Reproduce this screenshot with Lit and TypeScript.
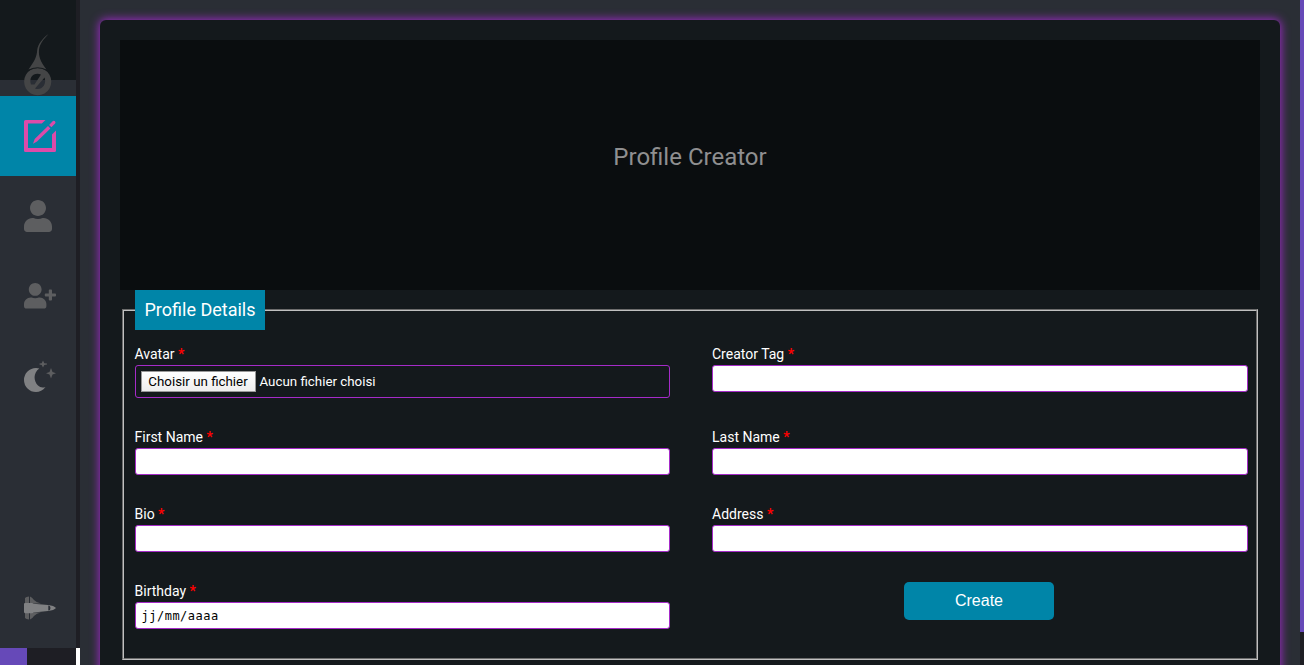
import { LitElement, html, css, svg } from "lit";
import { customElement } from "lit/decorators.js";

const BODY =
  "M224 256c70.7 0 128-57.3 128-128S294.7 0 224 0 96 57.3 96 128s57.3 128 128 128zm89.6 32h-16.7c-22.2 10.2-46.9 16-72.9 16s-50.6-5.8-72.9-16h-16.7C60.2 288 0 348.2 0 422.4V464c0 26.5 21.5 48 48 48h352c26.5 0 48-21.5 48-48v-41.6c0-74.2-60.2-134.4-134.4-134.4z";
const PLUS =
  "M624 208h-64v-64c0-8.8-7.2-16-16-16h-32c-8.8 0-16 7.2-16 16v64h-64c-8.8 0-16 7.2-16 16v32c0 8.8 7.2 16 16 16h64v64c0 8.8 7.2 16 16 16h32c8.8 0 16-7.2 16-16v-64h64c8.8 0 16-7.2 16-16v-32c0-8.8-7.2-16-16-16z";

@customElement("side-nav")
class SideNav extends LitElement {
  static styles = css`
    :host { display: flex; flex-direction: column; width: 76px; height: 665px; border-right: 4px solid #1e1e24; background: #2a2e35; box-sizing: content-box; }
    .logo { display: flex; height: 80px; margin-bottom: 16px; background: #14191c; padding: 32px 0 0 24px; box-sizing: border-box; }
    .logo svg { flex: none; overflow: visible; }
    .item { display: flex; align-items: center; height: 80px; padding-left: 24px; color: #5d5e60; }
    .active { background: #0085a8; color: #dc4ba9; }
    .last { margin-top: auto; }
    .bar { display: flex; height: 17px; margin-right: -4px; background: #1e1e24; flex: none; }
    .thumb { width: 27px; background: #6649b8; }
    .corner { width: 4px; margin-left: auto; background: #fff; }
  `;
  render() {
    return html`
      <div class="logo">
        <svg width="28" height="64" viewBox="0 0 28 64">
          ${svg`<g fill="#444546"><path d="M24.5 2C19 6 14 12 13.2 18C12.8 25 10.5 29 4.5 37.5Q13.5 34.2 22.5 37.5C16 29 14.5 24 15 18C15.6 12 19 8 24.5 2Z"/>
          <path fill-rule="evenodd" d="M13.7 36a13.6 13.6 0 1 0 .01 0ZM17 42.500C10 40 4.500 45 7 52.500H10.500ZM20.600 45.500L11 56.500C17 59 23 53 20.600 45.500Z"/></g>
          <path d="M5 38Q13.500 33.500 22.500 38" fill="none" stroke="#14191c" stroke-width=".8"/>`}
        </svg>
      </div>
      <div class="item active">
        <svg width="32" height="32" viewBox="0 0 32 32" fill="currentColor">
          <path d="M1.500 0H21.500L17.800 3.500H4V28H28V14.500L32 10.500V30.500Q32 32 30.500 32H1.500Q0 32 0 30.500V1.500Q0 0 1.500 0Z"/>
          <path d="M9 23.800L10.700 19L24 6L26.400 8.500L13 21.500ZM25.100 5L28.900 1.100Q30 .2 31 1.200Q32 2.400 31.100 3.400L27.400 7.300Z"/>
        </svg>
      </div>
      <div class="item"><svg width="28" height="32" viewBox="0 0 448 512" fill="currentColor"><path d=${BODY} /></svg></div>
      <div class="item"><svg width="32" height="25.6" viewBox="0 0 640 512" fill="currentColor"><path d=${BODY} /><path d=${PLUS} /></svg></div>
      <div class="item">
        <svg width="32" height="32" viewBox="0 0 32 32" fill="currentColor">
          <path fill="#808183" d="M12 8Q14 8 15.300 8.500C9 13 9.500 21 14 25.500Q17 28.500 21.500 27C19 30.500 15.500 32 12 32A12 12 0 0 1 12 8Z"/>
          <path d="M19 .5L20.300 3.200L23 3.500V4.500L20.300 5L19 7.500L17.700 5L15.500 4.500V3.500L17.700 3.200ZM27 8L28.500 12L32 13.300L28.500 14.600L27 18.500L25.500 14.600L22 13.300L25.500 12Z"/>
        </svg>
      </div>
      <div class="item last">
        <svg width="32" height="24" viewBox="0 0 32 24">
          <path fill="#5d5e60" d="M1 7V2Q2 .8 5 .5V7ZM6 .5Q8 1 10 4Q12.500 6.700 17 7.500H6ZM1 17V22Q2 23.200 5 23.500V17ZM6 23.500Q8 23 10 20Q12.500 17.300 17 16.500H6Z"/>
          <path fill="#808183" fill-rule="evenodd" d="M0 8Q0 7 1 7H8Q9 7 9.500 7.700L24 9Q30 9.700 32 12Q30 14.300 24 15L9.500 16.500Q9 17.300 8 17.300H1Q0 17 0 16ZM24.300 9.500V14.500Q26.500 14.500 26.500 12T24.300 9.500Z"/>
        </svg>
      </div>
      <div class="bar"><div class="thumb"></div><div class="corner"></div></div>
    `;
  }
}

@customElement("app-root")
class AppRoot extends LitElement {
  static styles = css`
    :host { display: flex; width: 1304px; height: 665px; overflow: hidden; background: #2a2e35; font-family: Roboto, sans-serif; font-size: 14px; color: #fff; }
    .main { flex: 1; min-width: 0; padding: 20px 20px 0; overflow: hidden; box-sizing: border-box; }
    .card { height: 700px; padding: 20px; border-radius: 6px; background: #14191c; box-shadow: 0 0 10px 1px #9b2bc4; box-sizing: border-box; }
    .hero { display: flex; align-items: center; justify-content: center; height: 250px; background: #0a0d0f; color: #8f8f90; font-size: 24px; padding-bottom: 17px; box-sizing: border-box; }
    fieldset { height: 370px; margin: 0 2px; padding: 0 8px 0 10.5px; border: 2px groove #c0c0c0; box-sizing: border-box; min-width: 0; }
    legend { height: 40px; width: 130px; margin: 0 auto 0 0; padding: 0 0 0 10px; box-sizing: border-box; line-height: 40px; text-align: left; white-space: nowrap; background: #0085a8; font-size: 18px; }
    .grid { display: grid; grid-template-columns: 535.5px 535.5px; column-gap: 42px; grid-template-rows: 83px 77px 77px 77px; padding-top: 16px; }
    .field { display: flex; flex-direction: column; }
    .label { line-height: 16px; height: 19px; }
    .label b { color: #f00; font-weight: 700; }
    .box { height: 27px; box-sizing: border-box; border: 1px solid #a52bc8; border-radius: 3px; background: #fff; color: #000; padding: 0 6px; line-height: 26px; }
    .file { height: 33px; display: flex; align-items: center; gap: 4px; padding: 0 5px; background: transparent; color: #fff; font-size: 13.33px; }
    .pick { height: 21px; width: 115px; box-sizing: border-box; border: 1px solid #999; background: linear-gradient(#fff, #eee); color: #000; text-align: center; line-height: 19px; }
    .date { font-family: "DejaVu Sans Mono", monospace; font-size: 12px; letter-spacing: 0.5px; }
    .create { display: block; width: 150px; height: 38px; margin: -1px 0 0 192px; border: 0; border-radius: 5px; background: #0085a8; color: #fff; font: 16px "Liberation Sans", Arial, sans-serif; padding: 0 0 1px; }
    .scroll { width: 4px; background: #1e1e24; }
    .thumb { height: 632px; background: #6649b8; }
  `;
  field(name: string, content: unknown = html`<div class="box"></div>`) {
    return html`<div class="field"><div class="label">${name} <b>*</b></div>${content}</div>`;
  }
  render() {
    return html`
      <side-nav></side-nav>
      <div class="main">
        <div class="card">
          <div class="hero">Profile Creator</div>
          <fieldset>
            <legend>Profile Details</legend>
            <div class="grid">
              ${this.field("Avatar", html`<div class="box file"><span class="pick">Choisir un fichier</span><span>Aucun fichier choisi</span></div>`)}
              ${this.field("Creator Tag")}
              ${this.field("First Name")}
              ${this.field("Last Name")}
              ${this.field("Bio")}
              ${this.field("Address")}
              ${this.field("Birthday", html`<div class="box date">jj/mm/aaaa</div>`)}
              <div><button class="create">Create</button></div>
            </div>
          </fieldset>
        </div>
      </div>
      <div class="scroll"><div class="thumb"></div></div>
    `;
  }
}
